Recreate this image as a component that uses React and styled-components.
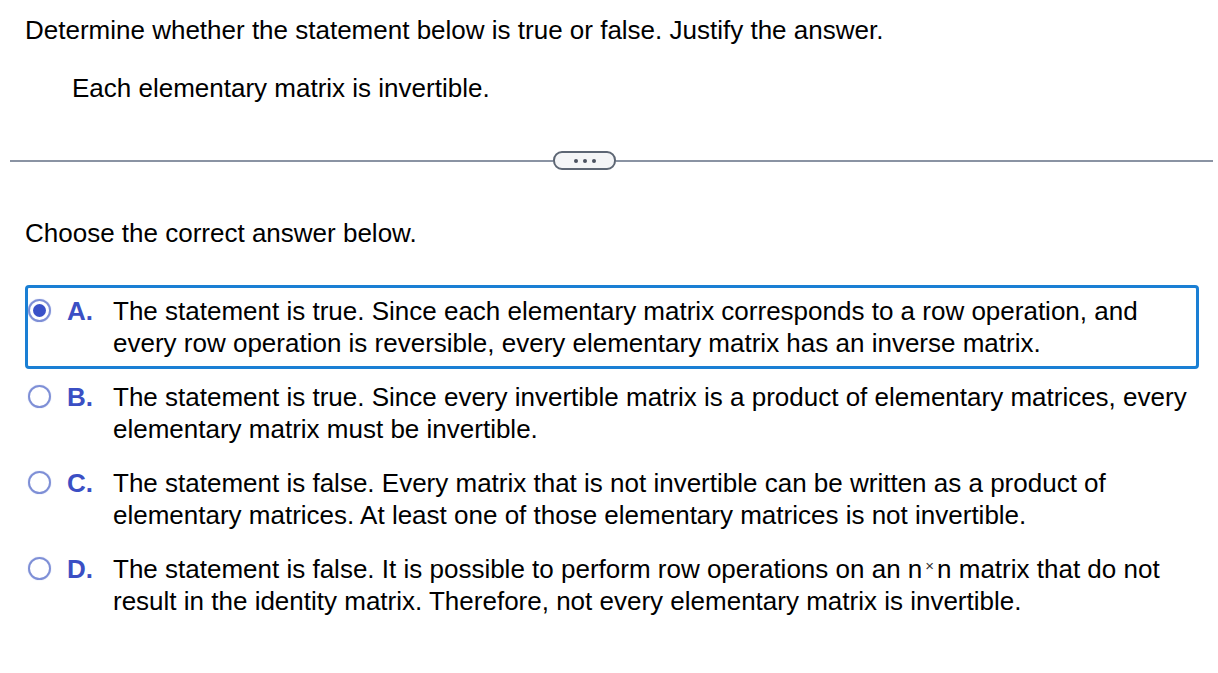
import styled, { createGlobalStyle } from "styled-components";

const Global = createGlobalStyle`
  body {
    margin: 0;
    background: #fff;
    font-family: "Liberation Sans", Arial, sans-serif;
    color: #000;
  }
`;

const Page = styled.div`
  width: 1218px;
  padding-top: 14px;
`;

const Question = styled.p`
  margin: 0 0 0 25px;
  font-size: 26px;
  line-height: 32px;
`;

const Statement = styled.p`
  margin: 26px 0 0 72px;
  font-size: 26px;
  line-height: 32px;
`;

const Divider = styled.div`
  margin: 47px 5px 0 10px;
  height: 19px;
  display: flex;
  align-items: center;
  &::before,
  &::after {
    content: "";
    height: 2px;
    background: #8a93a3;
  }
  &::before {
    width: 543px;
  }
  &::after {
    flex: 1;
  }
`;

const MoreButton = styled.div`
  width: 59px;
  height: 15px;
  border: 2px solid #5d6674;
  border-radius: 9px;
  background: #f4f5f7;
  display: flex;
  align-items: center;
  justify-content: center;
  gap: 5px;
  span {
    width: 4px;
    height: 4px;
    border-radius: 50%;
    background: #4b5260;
  }
`;

const Prompt = styled.p`
  margin: 47px 0 0 25px;
  font-size: 26px;
  line-height: 32px;
`;

const Options = styled.div`
  margin: 36px 0 0 25px;
  width: 1174px;
  display: flex;
  flex-direction: column;
  gap: 2px;
`;

const Option = styled.div`
  display: flex;
  align-items: flex-start;
  padding: 7px 8px 7px 0;
  border: 3px solid ${(p) => (p.$selected ? "#1a7fd4" : "transparent")};
  border-radius: 4px;
  font-size: 26px;
  line-height: 32px;
`;

const Radio = styled.span`
  flex: none;
  width: 23px;
  height: 23px;
  margin-top: 4px;
  box-sizing: border-box;
  border-radius: 50%;
  border: 2px solid #7e8fd6;
  box-shadow: 0 0 1px #9aa8e6;
  display: flex;
  align-items: center;
  justify-content: center;
  &::after {
    content: "";
    width: 13px;
    height: 13px;
    border-radius: 50%;
    background: #3a51c8;
    display: ${(p) => (p.$checked ? "block" : "none")};
  }
`;

const Letter = styled.span`
  flex: none;
  width: 46px;
  margin-left: 16px;
  font-weight: bold;
  color: #3b4fc4;
`;

const Text = styled.span`
  flex: 1;
`;

const Times = styled.span`
  display: inline-block;
  font-size: 15px;
  line-height: 1;
  vertical-align: 7px;
  color: #333;
  margin: 0 3px;
`;

const options = [
  {
    letter: "A.",
    text: "The statement is true. Since each elementary matrix corresponds to a row operation, and every row operation is reversible, every elementary matrix has an inverse matrix.",
    selected: true,
  },
  {
    letter: "B.",
    text: "The statement is true. Since every invertible matrix is a product of elementary matrices, every elementary matrix must be invertible.",
  },
  {
    letter: "C.",
    text: "The statement is false. Every matrix that is not invertible can be written as a product of elementary matrices. At least one of those elementary matrices is not invertible.",
  },
  {
    letter: "D.",
    text: (
      <>
        The statement is false. It is possible to perform row operations on an n
        <Times>×</Times>n matrix that do not result in the identity matrix. Therefore, not every
        elementary matrix is invertible.
      </>
    ),
  },
];

export default function App() {
  return (
    <Page>
      <Global />
      <Question>Determine whether the statement below is true or false. Justify the answer.</Question>
      <Statement>Each elementary matrix is invertible.</Statement>
      <Divider>
        <MoreButton>
          <span />
          <span />
          <span />
        </MoreButton>
      </Divider>
      <Prompt>Choose the correct answer below.</Prompt>
      <Options>
        {options.map((o) => (
          <Option key={o.letter} $selected={o.selected}>
            <Radio $checked={o.selected} />
            <Letter>{o.letter}</Letter>
            <Text>{o.text}</Text>
          </Option>
        ))}
      </Options>
    </Page>
  );
}
